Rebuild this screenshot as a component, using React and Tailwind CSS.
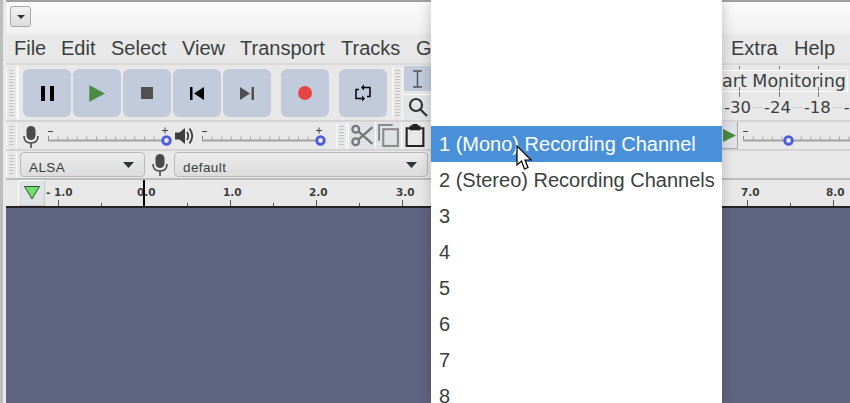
const mainFont = "font-['Liberation_Sans',sans-serif]";
const rulerFont = "font-['DejaVu_Sans',sans-serif]";

const menus = [
  ["File", "w-[47px]"],
  ["Edit", "w-[50px]"],
  ["Select", "w-[71px]"],
  ["View", "w-[58px]"],
  ["Transport", "w-[101px]"],
  ["Tracks", "w-[75px]"],
  ["Generate", "w-[315px]"],
  ["Extra", "w-[63px]"],
  ["Help", "w-[50px]"],
];

const rulerLabels = [
  ["- 1.0", 40],
  ["0.0", 131],
  ["1.0", 217],
  ["2.0", 303],
  ["3.0", 390],
  ["7.0", 735],
  ["8.0", 820],
];

const channels = ["1 (Mono) Recording Channel", "2 (Stereo) Recording Channels", "3", "4", "5", "6", "7", "8"];

function Grip({ className }) {
  return (
    <div className={`flex flex-col justify-center gap-[2px] border-x border-white/70 px-[2px] w-[11px] shrink-0 ${className}`}>
      {Array.from({ length: 7 }).map((_, i) => (
        <div key={i} className="h-px bg-[#c4c4c4]" />
      ))}
    </div>
  );
}

function TallGrip() {
  return (
    <div className="flex flex-col justify-center gap-[2px] border-x border-white/70 px-[2px] w-[11px] h-[52px] shrink-0">
      {Array.from({ length: 16 }).map((_, i) => (
        <div key={i} className="h-px bg-[#c4c4c4]" />
      ))}
    </div>
  );
}

function TransportButton({ children, className = "" }) {
  return (
    <div className={`w-[48px] h-[48px] rounded-[6px] bg-[#c1cbdc] flex items-center justify-center ${className}`}>
      {children}
    </div>
  );
}

function Mic({ className = "" }) {
  return (
    <svg width="16" height="22" viewBox="0 0 16 22" className={`shrink-0 ${className}`}>
      <rect x="3.5" y="0" width="9" height="14" rx="4.5" fill="#4a4a4a" />
      <path d="M1 10 C1 15 4 17 8 17 C12 17 15 15 15 10" fill="none" stroke="#4a4a4a" strokeWidth="1.6" />
      <path d="M8 17 V22" stroke="#4a4a4a" strokeWidth="1.6" />
    </svg>
  );
}

function Speaker() {
  return (
    <svg width="20" height="18" viewBox="0 0 20 18" className="shrink-0">
      <path d="M0 5.5 H4.5 L10 1 V17 L4.5 12.5 H0 Z" fill="#3d3d3d" />
      <path d="M12 5 Q14.5 9 12 13" fill="none" stroke="#3d3d3d" strokeWidth="1.8" />
      <path d="M14.5 1.5 Q20 9 14.5 16.5" fill="none" stroke="#3d3d3d" strokeWidth="1.8" />
    </svg>
  );
}

function Slider({ width = 124, thumb = 118.5 }) {
  const count = Math.floor(width / 9.6);
  const ticks = Array.from({ length: count }).map((_, i) => 0.5 + i * 9.6);
  return (
    <svg width={width} height="22" viewBox={`0 0 ${width} 22`} className="shrink-0">
      <path d="M0 6.5 H5" stroke="#444" strokeWidth="1" />
      <path d={`M${width - 10} 5.5 H${width - 4} M${width - 7} 2.5 V8.5`} stroke="#444" strokeWidth="1" />
      {ticks.map((x) => (
        <path key={x} d={`M${x} 11.5 V15`} stroke="#aaa" strokeWidth="1" />
      ))}
      <path d="M0.5 11 V15" stroke="#888" strokeWidth="1" />
      <path d={`M0 15.5 H${width - 4}`} stroke="#a3a3a3" strokeWidth="2" />
      <circle cx={thumb} cy="15.5" r="3.8" fill="#e8e8e8" stroke="#4d5ae0" strokeWidth="2.8" />
    </svg>
  );
}

function Combo({ label, className }) {
  return (
    <div className={`h-[25px] rounded-[4px] border border-[#b9b9b9] bg-gradient-to-b from-[#ececec] to-[#dcdcdc] flex items-center justify-between pl-[8px] pr-[10px] text-[13.5px] text-[#3a3f41] tracking-[0.4px] ${className}`}>
      <span className="pt-[7px]">{label}</span>
      <svg width="11" height="6" viewBox="0 0 11 6"><path d="M0 0 H11 L5.5 6 Z" fill="#2e3436" /></svg>
    </div>
  );
}

function RulerTicks() {
  const ticks = Array.from({ length: 20 }).map((_, i) => 58 + i * 43.06);
  return (
    <svg width="844" height="6" viewBox="0 0 844 6" className="block">
      {ticks.map((x, i) => (
        <path key={i} d={`M${Math.round(x - 6) + 0.5} ${i % 2 === 0 ? 0 : 3} V6`} stroke="#555" strokeWidth="1" />
      ))}
    </svg>
  );
}

export default function App() {
  return (
    <div className={`relative w-[850px] h-[403px] overflow-hidden flex bg-[#f1f1f1] ${mainFont}`}>
      <div className="w-[6px] shrink-0 flex">
        <div className="w-[3px] bg-[#bdbdbd]" />
        <div className="w-[3px] bg-[#e8e8e8]" />
      </div>

      {/* main window */}
      <div className="flex-1 flex flex-col min-w-0">
        {/* title bar */}
        <div className="h-[34px] shrink-0 border-t-2 border-[#a0a0a0] bg-gradient-to-b from-[#fbfbfb] to-[#f0f0f0] pl-[4px] pt-[4px]">
          <div className="w-[21px] h-[21px] rounded-[3px] border border-[#a9a9a9] bg-gradient-to-b from-[#f2f2f2] to-[#dddddd] flex items-center justify-center">
            <svg width="8" height="4" viewBox="0 0 8 4"><path d="M0 0 H8 L4 4 Z" fill="#2e3436" /></svg>
          </div>
        </div>

        {/* menu bar */}
        <div className="h-[31px] shrink-0 bg-[#e8e8e8] flex items-center pl-[8px] text-[20px] text-[#3a3f41] pb-[1px] border-b-2 border-[#d9d9d9]">
          {menus.map(([name, w]) => (
            <div key={name} className={`${w} shrink-0`}>{name}</div>
          ))}
        </div>

        {/* transport row */}
        <div className="h-[57px] shrink-0 bg-[#e8e8e8] flex items-center border-b-2 border-[#d4d4d4]">
          <TallGrip />
          <div className="flex gap-[2px] h-[55px] items-center border-l-2 border-white/70 pl-[4px] pt-[1px]">
            <TransportButton>
              <svg width="13" height="15" viewBox="0 0 13 15"><path d="M0 0 H4 V15 H0 Z M9 0 H13 V15 H9 Z" fill="#000" /></svg>
            </TransportButton>
            <TransportButton>
              <svg width="16" height="17" viewBox="0 0 16 17"><path d="M0.5 0.5 L15.5 8.5 L0.5 16.5 Z" fill="#4a8a42" stroke="#6c9a66" strokeWidth="0.8" /></svg>
            </TransportButton>
            <TransportButton>
              <div className="w-[12px] h-[12px] bg-[#505050]" />
            </TransportButton>
            <TransportButton>
              <svg width="14" height="13" viewBox="0 0 14 13"><path d="M0 0 H2.5 V13 H0 Z M14 0 V13 L4 6.5 Z" fill="#000" /></svg>
            </TransportButton>
            <TransportButton>
              <svg width="14" height="13" viewBox="0 0 14 13"><path d="M0 0 L10 6.5 L0 13 Z M11.5 0 H14 V13 H11.5 Z" fill="#505050" /></svg>
            </TransportButton>
            <TransportButton className="ml-[8px]">
              <div className="w-[14px] h-[14px] rounded-full bg-[#e64548]" />
            </TransportButton>
            <TransportButton className="ml-[8px]">
              <svg width="16" height="18" viewBox="0 0 16 18" fill="none" stroke="#000" strokeWidth="1.5">
                <path d="M9 3.5 H15 V12.5 H12" />
                <path d="M7 14.5 H1 V5.5 H4" />
                <path d="M9 0.5 L6 3.5 L9 6.5 Z M7 11.5 L10 14.5 L7 17.5 Z" fill="#000" stroke="none" />
              </svg>
            </TransportButton>
          </div>
          <div className="ml-[5px]"><TallGrip /></div>
          <div className="ml-[1px] flex flex-col gap-[3px]">
            <div className="w-[27px] h-[25px] bg-[#c1cbdc] flex items-center justify-center">
              <svg width="11" height="18" viewBox="0 0 11 18" fill="none" stroke="#555" strokeWidth="1.5"><path d="M1 1 H10 M5.5 1 V17 M1 17 H10" /></svg>
            </div>
            <div className="w-[27px] h-[25px] bg-[#e2e4e6] border-t border-white flex items-center justify-center">
              <svg width="20" height="20" viewBox="0 0 20 20" fill="none" stroke="#333" strokeWidth="2.2"><circle cx="8" cy="8" r="6" /><path d="M12 12 L19 19" /></svg>
            </div>
          </div>
        </div>

        {/* mixer row */}
        <div className="h-[29px] shrink-0 bg-[#e8e8e8] flex items-center border-b-2 border-[#d4d4d4]">
          <Grip className="h-[26px]" />
          <Mic className="ml-[6px] mt-[2px]" />
          <div className="ml-[9px] shrink-0"><Slider /></div>
          <div className="ml-[3px] shrink-0"><Speaker /></div>
          <div className="ml-[7px] shrink-0"><Slider /></div>
          <div className="ml-[10px] shrink-0"><Grip className="h-[26px]" /></div>
          <div className="ml-[1px] flex h-[27px] shrink-0">
            <div className="w-[27px] bg-[#dfe3e8] border-l border-white flex items-center justify-center">
              <svg width="24" height="23" viewBox="0 0 22 22" fill="none" stroke="#777" strokeWidth="2.2"><circle cx="5" cy="5" r="3.2" /><circle cx="5" cy="17" r="3.2" /><path d="M7.5 7 L21 19 M7.5 15 L21 3" /></svg>
            </div>
            <div className="w-[26px] bg-[#dfe3e8] border-l border-white flex items-center justify-center">
              <svg width="21" height="23" viewBox="0 0 20 22" fill="none" stroke="#8a8a8a" strokeWidth="2"><path d="M1 16 V1 H14" /><rect x="5" y="5" width="14" height="16" /></svg>
            </div>
            <div className="w-[27px] bg-[#e8e8e8] border-l border-white flex items-center justify-center">
              <svg width="20" height="23" viewBox="0 0 18 22" fill="none" stroke="#222" strokeWidth="2"><path d="M5 4 H1 V21 H17 V4 H13" /><path d="M5 5 V2.5 H7.5 V1 H10.5 V2.5 H13 V5 Z" fill="#222" /></svg>
            </div>
          </div>
          {/* bit of the playback meter row right of the dropdown */}
          <div className="ml-[283px] w-[27px] h-[27px] shrink-0 bg-[#dfe3e8] border-r border-b border-[#a8a8a8] flex items-center justify-end pr-[1px]">
            <svg width="13" height="13" viewBox="0 0 13 13"><path d="M0 0 L13 6.5 L0 13 Z" fill="#4a8a42" /></svg>
          </div>
          <div className="ml-[5px] shrink-0"><Slider width={130} thumb={45.5} /></div>
        </div>

        {/* device row */}
        <div className="h-[29px] shrink-0 bg-[#e8e8e8] flex items-center border-b-2 border-[#bdbdbd]">
          <Grip className="h-[25px]" />
          <Combo label="ALSA" className="ml-[3px] w-[125px]" />
          <Mic className="ml-[7px]" />
          <Combo label="default" className="ml-[6px] w-[254px]" />
        </div>

        {/* ruler */}
        <div className="relative h-[28px] shrink-0 bg-[#e8e8e8] border-b-2 border-[#222] flex flex-col justify-end">
          <div className="absolute left-[12px] top-0 w-[27px] h-[26px] bg-[#dfe3e8] border border-l-white border-t-white border-r-[#c8c8c8] border-b-[#c8c8c8] flex items-center justify-center">
            <svg width="16" height="14" viewBox="0 0 16 14"><path d="M0.5 0.5 H15.5 L8 13 Z" fill="#6fe06f" stroke="#2f4f2f" strokeWidth="1" /></svg>
          </div>
          {rulerLabels.map(([label, x]) => (
            <span key={label} className={`absolute top-[5px] text-[10.5px] font-bold text-[#3a3f41] whitespace-nowrap ${rulerFont}`} style={{ left: x }}>
              {label}
            </span>
          ))}
          <div className="absolute left-[137px] top-0 h-[26px] w-[1.5px] bg-black" />
          <RulerTicks />
        </div>

        {/* track area */}
        <div className="flex-1 bg-[#5f6480]" />
      </div>

      {/* meter ticks behind the texts */}
      <svg width="128" height="42" viewBox="0 0 128 42" className="absolute left-[722px] top-[66px]">
        <path d="M0 42 H128" stroke="#bdbdbd" strokeWidth="1" />
        <path d="M17.5 0 V3 M57.5 0 V3 M96.5 0 V3 M17.5 21 V31 M57.5 21 V31 M96.5 21 V31" stroke="#777" strokeWidth="1" />
      </svg>

      {/* text in the meter rows, right of the dropdown */}
      <div className={`absolute left-[700px] top-[70px] w-[148px] h-[22px] border border-white pl-[3px] text-[17.5px] leading-[20px] text-[#3a3f41] whitespace-nowrap ${rulerFont}`}>
        Start Monitoring
      </div>
      <div className={`absolute left-[723px] top-[98px] flex gap-[11px] text-[16.5px] leading-[20px] text-[#3a3f41] whitespace-nowrap ${rulerFont}`}>
        <span className="bg-[#e8e8e8] px-px">-30</span>
        <span className="bg-[#e8e8e8] px-px">-24</span>
        <span className="bg-[#e8e8e8] px-px">-18</span>
        <span className="bg-[#e8e8e8] px-px">-</span>
      </div>

      {/* channels dropdown */}
      <div className="absolute left-[431px] top-0 w-[291px] h-[403px] bg-white pt-[126px] shadow-[0_0_12px_rgba(0,0,0,0.22)] text-[20px] text-[#3a3f41]">
        {channels.map((c, i) => (
          <div key={c} className={`h-[36px] leading-[36px] pl-[8px] whitespace-nowrap ${i === 0 ? "bg-[#4a90d9] text-white" : ""}`}>
            {c}
          </div>
        ))}
      </div>

      {/* mouse cursor */}
      <svg width="18" height="26" viewBox="0 0 18 26" className="absolute left-[516px] top-[145px]">
        <path d="M1 1 V20 L5.5 16 L8.5 24 L12 22.5 L9 15 H15 Z" fill="#fff" stroke="#000" strokeWidth="1.2" />
      </svg>
    </div>
  );
}
